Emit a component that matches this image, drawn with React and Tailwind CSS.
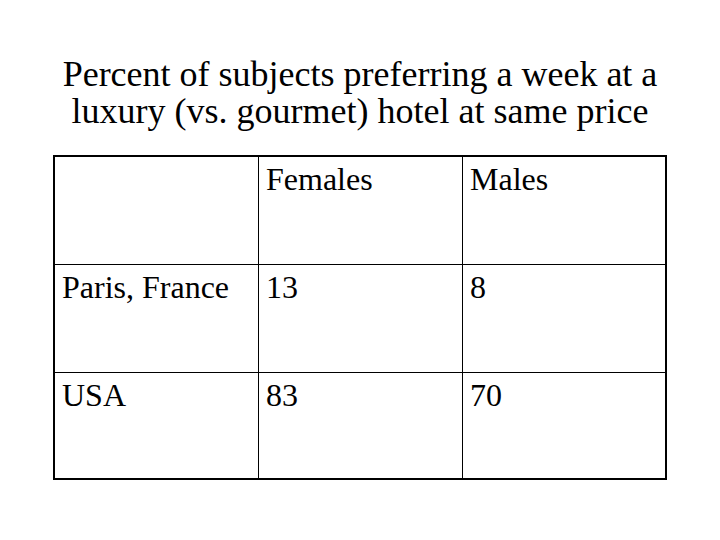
export default function App() {
  const rows = [
    ["", "Females", "Males"],
    ["Paris, France", "13", "8"],
    ["USA", "83", "70"],
  ];
  return (
    <div
      className="w-[720px] h-[540px] bg-white text-black overflow-hidden"
      style={{ fontFamily: '"Liberation Serif", "Times New Roman", serif' }}
    >
      <div className="pt-[56px] text-center text-[36px] leading-[37px]">
        <div>Percent of subjects preferring a week at a</div>
        <div>luxury (vs. gourmet) hotel at same price</div>
      </div>
      <div className="ml-[53px] mt-[25px] w-[614px] h-[325px] border-2 border-black grid grid-cols-[203px_204px_203px] grid-rows-[107px_108px_106px]">
        {rows.map((r, ri) =>
          r.map((c, ci) => (
            <div
              key={ri + "-" + ci}
              className={
                "pl-[7px] pt-[5px] text-[32px] leading-[35px] border-black " +
                (ci > 0 ? "border-l " : "") +
                (ri > 0 ? "border-t " : "")
              }
            >
              {c}
            </div>
          ))
        )}
      </div>
    </div>
  );
}
